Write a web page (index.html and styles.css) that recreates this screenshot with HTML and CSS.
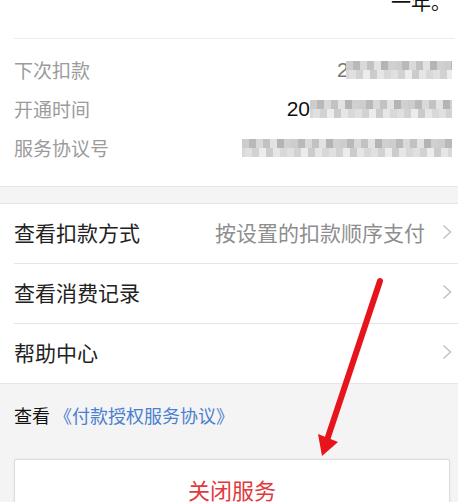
FILE: index.html
```html
<!DOCTYPE html>
<html lang="zh-CN">
<head>
  <meta charset="UTF-8">
  <meta name="viewport" content="width=device-width, initial-scale=1.0">
  <title>服务详情</title>
  <link rel="stylesheet" href="styles.css">
</head>
<body>
  <div class="page">
    <section class="summary">
      <p class="summary-tail">一年。</p>
      <ul class="info">
        <li class="info-row">
          <span class="info-label">下次扣款</span>
          <span class="info-value"><span class="peek peek-cut">2</span><span class="mosaic mosaic-a"></span></span>
        </li>
        <li class="info-row">
          <span class="info-label">开通时间</span>
          <span class="info-value"><span class="peek">20</span><span class="mosaic mosaic-b"></span></span>
        </li>
        <li class="info-row">
          <span class="info-label">服务协议号</span>
          <span class="info-value"><span class="mosaic mosaic-c"></span></span>
        </li>
      </ul>
    </section>

    <ul class="menu">
      <li class="menu-item">
        <span class="menu-title">查看扣款方式</span>
        <span class="menu-note">按设置的扣款顺序支付</span>
        <svg class="chevron" viewBox="0 0 10 16"><polyline points="1.5,1.5 8.5,8 1.5,14.5"></polyline></svg>
      </li>
      <li class="menu-item">
        <span class="menu-title">查看消费记录</span>
        <svg class="chevron" viewBox="0 0 10 16"><polyline points="1.5,1.5 8.5,8 1.5,14.5"></polyline></svg>
      </li>
      <li class="menu-item">
        <span class="menu-title">帮助中心</span>
        <svg class="chevron" viewBox="0 0 10 16"><polyline points="1.5,1.5 8.5,8 1.5,14.5"></polyline></svg>
      </li>
    </ul>

    <section class="footer-area">
      <p class="agreement">查看 <a href="#" class="agreement-link">《付款授权服务协议》</a></p>
      <button class="close-button">关闭服务</button>
    </section>

    <!-- annotation arrow drawn over the screenshot -->
    <svg class="annotation" viewBox="0 0 458 502">
      <line x1="380" y1="281" x2="327" y2="440" stroke="#e8141b" stroke-width="6" stroke-linecap="round"></line>
      <polygon points="318,434 338,442 322,456" fill="#e8141b"></polygon>
    </svg>
  </div>
</body>
</html>
```

FILE: styles.css
```css
* {
  margin: 0;
  padding: 0;
  box-sizing: border-box;
}

body {
  font-family: "Noto Sans CJK SC", "Noto Sans", sans-serif;
  background-color: #f4f4f4;
  color: #111;
  overflow: hidden;
}

.page {
  position: relative;
  width: 458px;
  height: 502px;
  overflow: hidden;
}

ul {
  list-style: none;
}

/* top card */
.summary {
  background-color: #fff;
  border-bottom: 1px solid #e6e6e6;
  padding-bottom: 19px;
}

.summary-tail {
  margin: -13px 3px 0 14px;
  padding: 0 4px 21px 0;
  font-size: 20px;
  line-height: 30px;
  text-align: right;
  border-bottom: 1px solid #ececec;
}

.info {
  padding: 11px 6px 0 14px;
}

.info-row {
  display: flex;
  justify-content: space-between;
  align-items: center;
  height: 39px;
}

.info-label {
  font-size: 19px;
  color: #9b9b9b;
}

.info-value {
  display: flex;
  align-items: center;
}

.peek {
  font-family: "Liberation Sans", Arial, sans-serif;
  font-size: 21px;
  color: #111;
  line-height: 18px;
}

.peek-cut {
  width: 9px;
  overflow: hidden;
  color: #777;
}

/* pixelated (blurred) values */
.mosaic {
  display: block;
  height: 18px;
  background-color: #d6d6d6;
  background-repeat: repeat-x;
  background-size: 49px 9px, 42px 9px;
  background-position: 0 0, 3px 9px;
  background-image:
    repeating-linear-gradient(to right, #cdcdcd 0 7px, #b9b9b9 7px 14px, #d9d9d9 14px 21px, #c2c2c2 21px 28px, #e2e2e2 28px 35px, #b4b4b4 35px 42px, #d0d0d0 42px 49px),
    repeating-linear-gradient(to right, #e0e0e0 0 7px, #d2d2d2 7px 14px, #ececec 14px 21px, #cbcbcb 21px 28px, #e6e6e6 28px 35px, #d8d8d8 35px 42px);
}

.mosaic-a {
  width: 106px;
}

.mosaic-b {
  width: 142px;
}

.mosaic-c {
  width: 210px;
}

/* menu list */
.menu {
  margin-top: 16px;
  background-color: #fff;
  border-top: 1px solid #e6e6e6;
  border-bottom: 1px solid #e6e6e6;
  padding-left: 14px;
}

.menu-item {
  display: flex;
  align-items: center;
  height: 60px;
  padding: 0 6px 3px 0;
  border-bottom: 1px solid #e6e6e6;
}

.menu-item:last-child {
  border-bottom: none;
  height: 59px;
}

.menu-title {
  flex: 1;
  font-size: 21px;
  color: #222;
}

.menu-note {
  font-size: 21px;
  color: #8e8e8e;
  margin-right: 17px;
}

.chevron {
  width: 10px;
  height: 16px;
  fill: none;
  stroke: #c4c4c8;
  stroke-width: 1.6;
}

/* bottom area */
.footer-area {
  padding: 20px 8px 0 14px;
}

.agreement {
  font-size: 18px;
  line-height: 22px;
  color: #111;
}

.agreement-link {
  color: #4a80d0;
  text-decoration: none;
}

.close-button {
  display: block;
  width: 100%;
  height: 62px;
  margin-top: 33px;
  padding-bottom: 2px;
  background-color: #fff;
  border: 1px solid #dcdcdc;
  border-radius: 2px;
  box-shadow: 0 0 2px rgba(0, 0, 0, 0.08);
  font-family: inherit;
  font-size: 22px;
  color: #e2383c;
}

.annotation {
  position: absolute;
  top: 0;
  left: 0;
  width: 458px;
  height: 502px;
  pointer-events: none;
}
```
